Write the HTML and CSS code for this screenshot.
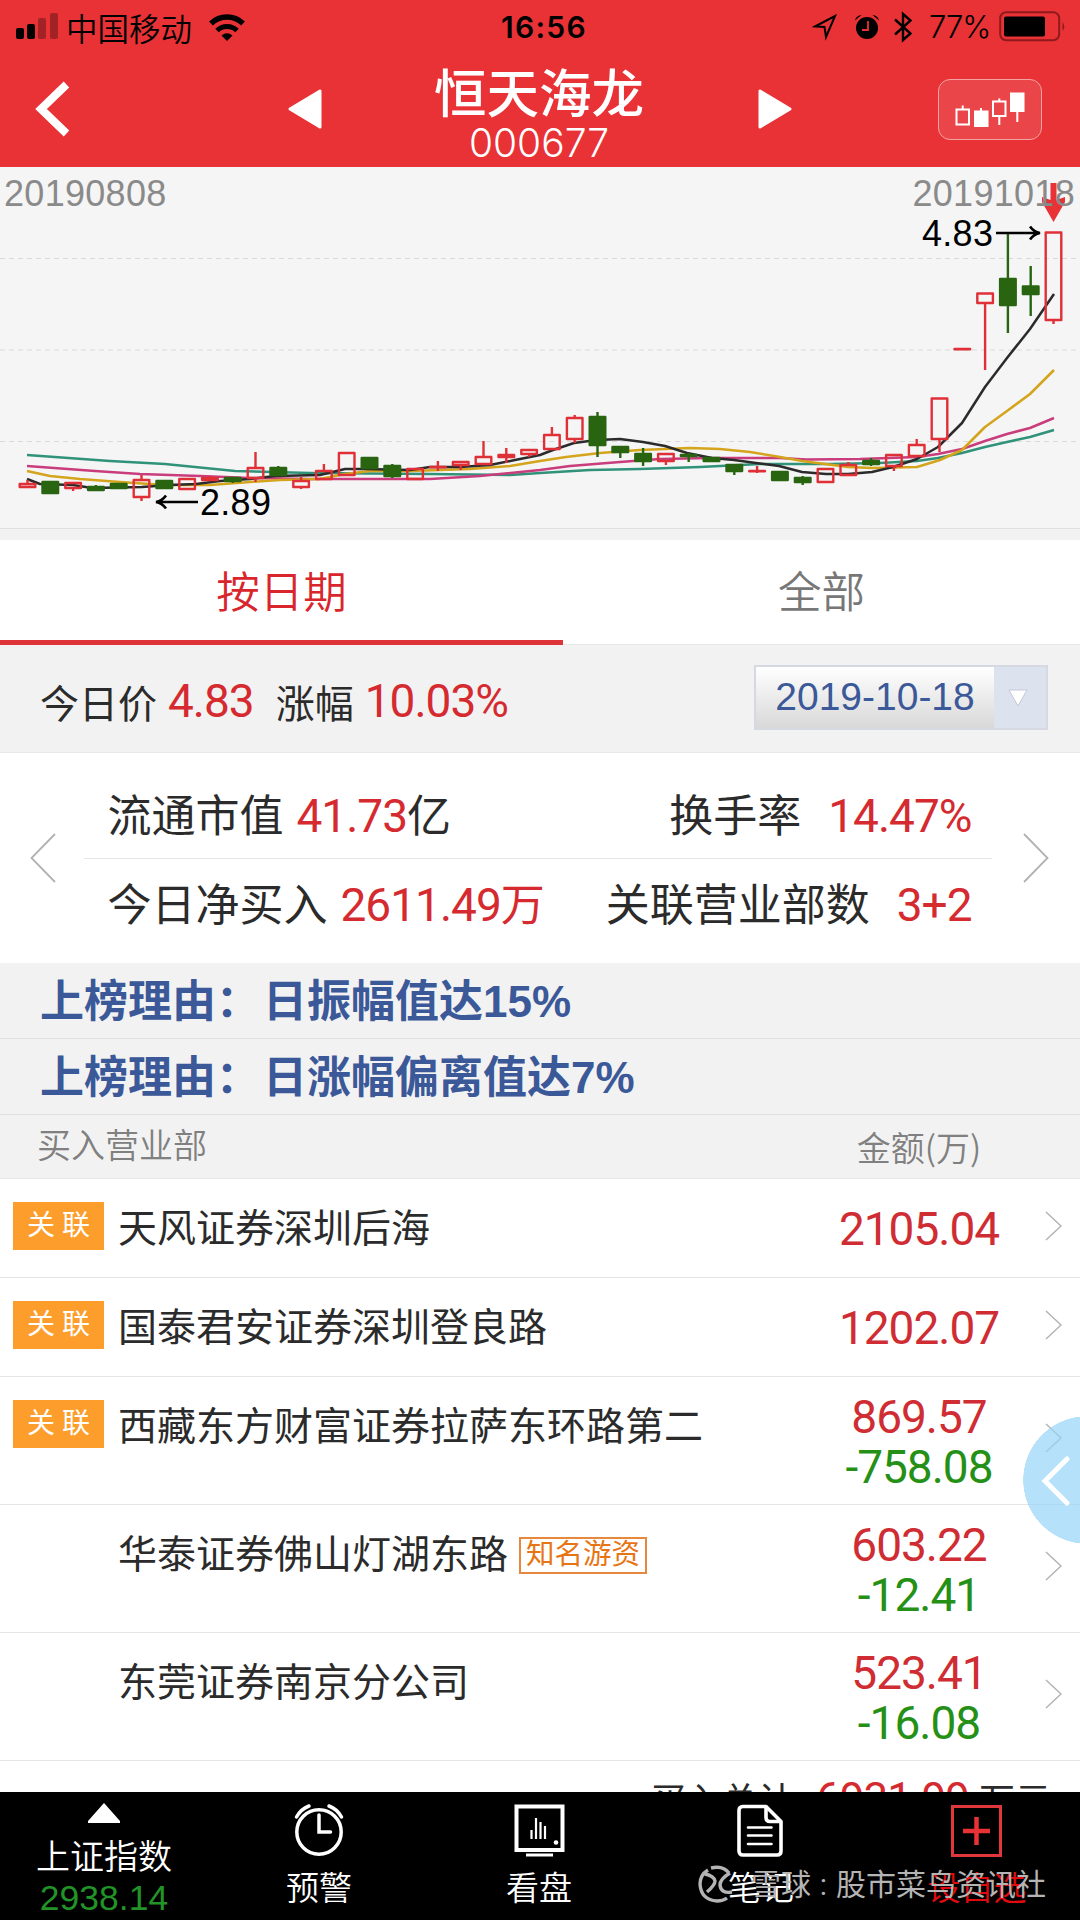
FILE: index.html
```html
<!DOCTYPE html>
<html lang="zh-CN">
<head>
    <meta charset="UTF-8">
    <meta name="viewport" content="width=device-width, initial-scale=1.0">
    <title>恒天海龙 000677</title>
    <link rel="stylesheet" href="styles.css">
</head>
<body>
    <header>
        <div class="status">
            <svg class="signal" width="42" height="28" viewBox="0 0 42 28">
                <rect x="0" y="15" width="8" height="11" rx="2"/>
                <rect x="11" y="11" width="8" height="15" rx="2"/>
                <rect x="22" y="5" width="8" height="21" rx="2" opacity=".3"/>
                <rect x="34" y="0" width="8" height="26" rx="2" opacity=".3"/>
            </svg>
            <span class="carrier">中国移动</span>
            <svg class="wifi" width="36" height="27" viewBox="0 0 36 27">
                <path d="M2 9.500A23 23 0 0 1 34 9.500" fill="none" stroke="#000" stroke-width="5.500"/>
                <path d="M8 16.500A14.500 14.500 0 0 1 28 16.500" fill="none" stroke="#000" stroke-width="5"/>
                <path d="M12.500 21.500Q18 17 23.500 21.500L18 27Z"/>
            </svg>
            <span class="clock">16:56</span>
            <svg class="locate" width="26" height="27" viewBox="0 0 26 27">
                <path d="M3 12.500L23 2L14 23L12.500 13Z" fill="none" stroke="#000" stroke-width="2"/>
            </svg>
            <svg class="alarm" width="24" height="26" viewBox="0 0 24 26">
                <circle cx="12" cy="14" r="11"/>
                <path d="M0 6.500Q1 1.500 6.500 1ZM24 6.500Q23 1.500 17.500 1Z"/>
                <path d="M13 7V16H7" fill="none" stroke="#e83236" stroke-width="1.800"/>
            </svg>
            <svg class="bluetooth" width="18" height="32" viewBox="0 0 18 32">
                <path d="M1 8.500L16.500 22.500L9 29V3L16.500 9.500L1 23.500" fill="none" stroke="#000" stroke-width="2.400"/>
            </svg>
            <span class="percent">77%</span>
            <svg class="battery" width="68" height="32" viewBox="0 0 68 32">
                <rect x="1.200" y="1.200" width="59" height="28" rx="6" fill="none" stroke="#8f1a1c" stroke-width="2"/>
                <rect x="5" y="5.500" width="41" height="20" rx="2"/>
                <path d="M63.500 11Q67 15.500 63.500 20Z" fill="#8f1a1c"/>
            </svg>
        </div>
        <nav class="titlebar">
            <svg class="back" width="36" height="56" viewBox="0 0 36 56">
                <path d="M31.500 3.500L6 28L31.500 52.500" fill="none" stroke="#fff" stroke-width="8"/>
            </svg>
            <svg class="prev" width="34" height="40" viewBox="0 0 34 40">
                <path d="M2 20L32 2V38Z" fill="#fff" stroke="#fff" stroke-width="3" stroke-linejoin="round"/>
            </svg>
            <div class="stock">
                <h1>恒天海龙</h1>
                <div class="code">000677</div>
            </div>
            <svg class="next" width="34" height="40" viewBox="0 0 34 40">
                <path d="M32 20L2 2V38Z" fill="#fff" stroke="#fff" stroke-width="3" stroke-linejoin="round"/>
            </svg>
            <div class="kline-btn">
                <svg width="70" height="36" viewBox="0 0 70 36" fill="none" stroke="#fff" stroke-width="2">
                    <path d="M1.500 18.500H14V33.500H1.500ZM7.700 14.500V18.500"/>
                    <path d="M20 20.500H32.500V35H20ZM26 17V20.500" fill="#fff"/>
                    <path d="M38 10.500H50.500V25H38ZM44.300 7.500V10.500M44.300 25V34"/>
                    <path d="M56 2.500H68.500V20H56ZM62.300 20V31" fill="#fff"/>
                </svg>
            </div>
        </nav>
    </header>

    <svg class="chart" id="chart" width="1080" height="373" viewBox="0 167 1080 373"></svg>

    <div class="tabs">
        <div class="tab active">按日期</div>
        <div class="tab">全部</div>
    </div>

    <section class="price">
        <span>今日价</span><b class="num today">4.83</b>
        <span>涨幅</span><b class="num">10.03%</b>
        <div class="date-select">
            <span>2019-10-18</span>
            <i><svg width="20" height="18" viewBox="0 0 20 18"><path d="M1 1H19L10 17Z" fill="#fff" stroke="#c3c8d6"/></svg></i>
        </div>
    </section>

    <section class="stats">
        <svg class="page-arrow" width="26" height="50" viewBox="0 0 26 50"><path d="M25 1L1.500 25L25 49"/></svg>
        <div class="stats-body">
            <div class="stats-row">
                <div>流通市值<b class="num">41.73</b>亿</div>
                <div>换手率<b class="num wide">14.47%</b></div>
            </div>
            <div class="stats-row">
                <div>今日净买入<b class="num">2611.49<em>万</em></b></div>
                <div>关联营业部数<b class="num wide">3+2</b></div>
            </div>
        </div>
        <svg class="page-arrow" width="26" height="50" viewBox="0 0 26 50"><path d="M1 1L24.500 25L1 49"/></svg>
    </section>

    <div class="reason"><span>上榜理由：</span>日振幅值达15%</div>
    <div class="reason"><span>上榜理由：</span>日涨幅偏离值达7%</div>

    <div class="list-head">
        <span>买入营业部</span>
        <span class="amount">金额(万)</span>
    </div>

    <ul class="list">
        <li>
            <div class="tag-col"><span class="tag">关 联</span></div>
            <div class="name">天风证券深圳后海</div>
            <div class="amount single"><span>2105.04</span></div>
            <svg class="go" width="18" height="30" viewBox="0 0 18 30"><path d="M1 1L16 15L1 29"/></svg>
        </li>
        <li>
            <div class="tag-col"><span class="tag">关 联</span></div>
            <div class="name">国泰君安证券深圳登良路</div>
            <div class="amount single"><span>1202.07</span></div>
            <svg class="go" width="18" height="30" viewBox="0 0 18 30"><path d="M1 1L16 15L1 29"/></svg>
        </li>
        <li class="tall">
            <div class="tag-col"><span class="tag">关 联</span></div>
            <div class="name">西藏东方财富证券拉萨东环路第二</div>
            <div class="amount"><span>869.57</span><span class="sell">-758.08</span></div>
            <svg class="go" width="18" height="30" viewBox="0 0 18 30"><path d="M1 1L16 15L1 29"/></svg>
        </li>
        <li class="tall">
            <div class="tag-col"></div>
            <div class="name">华泰证券佛山灯湖东路<span class="badge">知名游资</span></div>
            <div class="amount"><span>603.22</span><span class="sell">-12.41</span></div>
            <svg class="go" width="18" height="30" viewBox="0 0 18 30"><path d="M1 1L16 15L1 29"/></svg>
        </li>
        <li class="tall">
            <div class="tag-col"></div>
            <div class="name">东莞证券南京分公司</div>
            <div class="amount"><span>523.41</span><span class="sell">-16.08</span></div>
            <svg class="go" width="18" height="30" viewBox="0 0 18 30"><path d="M1 1L16 15L1 29"/></svg>
        </li>
    </ul>
    <div class="total">买入总计<b class="num">6931.99</b>万元</div>

    <div class="drawer">
        <svg width="30" height="50" viewBox="0 0 30 50"><path d="M26 3L4 25L26 47" fill="none" stroke="#fff" stroke-width="5" stroke-linecap="round"/></svg>
    </div>

    <footer>
        <div class="index">
            <svg width="34" height="20" viewBox="0 0 34 20"><path d="M17 0L33 18V20H1V18Z" fill="#fff"/></svg>
            <span>上证指数</span>
            <span class="value">2938.14</span>
        </div>
        <div class="item">
            <svg width="52" height="54" viewBox="0 0 52 54" fill="none" stroke="#fff" stroke-width="3.500">
                <circle cx="26" cy="29" r="22.200"/>
                <path d="M26 12V29H37.500" stroke-linecap="round"/>
                <path d="M3.500 14Q8 6 16 3M48.500 14Q44 6 36 3" stroke-linecap="round"/>
            </svg>
            <span>预警</span>
        </div>
        <div class="item">
            <svg width="52" height="54" viewBox="0 0 52 54" fill="none" stroke="#fff">
                <path d="M3.500 3.500H49.500V47H3.500Z" stroke-width="4"/>
                <path d="M13 52H40" stroke-width="3"/>
                <path d="M18.500 27V36M23 15V36M27.500 19V36M32 23V36" stroke-width="2.200"/>
                <circle cx="43" cy="39.500" r="2.300" fill="#fff" stroke="none"/>
            </svg>
            <span>看盘</span>
        </div>
        <div class="item">
            <svg width="52" height="54" viewBox="0 0 52 54" fill="none" stroke="#fff" stroke-width="3.600" stroke-linejoin="round" stroke-linecap="round">
                <path d="M8 3.500H31L46 18.500V48Q46 52 42 52H8Q4 52 4 48V7.500Q4 3.500 8 3.500Z"/>
                <path d="M31 4V14.500Q31 18.500 35 18.500H45"/>
                <path d="M13 24.500H36.500M13 32.500H36.500M13 41H36.500" stroke-width="2.600"/>
            </svg>
            <span>笔记</span>
        </div>
        <div class="item add">
            <svg width="52" height="54" viewBox="0 0 52 54" fill="none" stroke="#e0373c">
                <path d="M1.500 3.500H49.500V52.500H1.500Z" stroke-width="3"/>
                <path d="M25.500 14V42M12 28H39" stroke="#e83236" stroke-width="4.500"/>
            </svg>
            <span>设自选</span>
        </div>
        <div class="watermark">
            <svg width="38" height="40" viewBox="0 0 38 40" fill="none" stroke="#b4b4b4" stroke-width="3.400">
                <path d="M10 5Q2 10 2 19Q3 35 19 36Q25 36 29 33"/>
                <path d="M13 3Q25 0 31 8M7 9Q16 11 17 16Q17 20 9 27"/>
                <path d="M32 8Q22 14 22 20Q23 29 34 27"/>
            </svg>
            <span>雪球</span><span class="colon">:</span><span>股市菜鸟资讯社</span>
        </div>
    </footer>

    <script>
        const chart = document.getElementById('chart');
        const RED = '#df3038';
        const GREEN = '#296511';
        const START = 27.5;
        const STEP = 22.8;

        // type, body top, body bottom, wick top, wick bottom
        const candles = [
            ['r', 484, 487, 480, 487], ['g', 482, 493, 481, 493], ['r', 483, 488, 482, 491],
            ['g', 487, 490, 485, 491], ['g', 484, 488, 483, 488], ['r', 480, 497, 475, 501],
            ['g', 481, 488, 480, 489], ['r', 479, 489, 478, 489], ['r', 478, 480, 476, 481],
            ['g', 478, 481, 478, 483], ['r', 468, 478, 452, 482], ['g', 468, 475, 466, 476],
            ['r', 481, 487, 477, 489], ['r', 471, 479, 464, 479], ['r', 453, 475, 453, 475],
            ['g', 458, 468, 458, 468], ['g', 466, 476, 464, 478], ['r', 469, 479, 468, 479],
            ['r', 467, 467, 461, 471], ['r', 462, 465, 462, 470], ['r', 457, 464, 441, 464],
            ['r', 455, 457, 448, 463], ['r', 450, 454, 450, 457], ['r', 435, 449, 427, 449],
            ['r', 418, 439, 415, 443], ['g', 417, 445, 412, 457], ['g', 447, 452, 446, 458],
            ['g', 454, 461, 448, 466], ['r', 454, 461, 454, 465], ['g', 455, 456, 453, 462],
            ['g', 458, 461, 457, 462], ['g', 465, 471, 464, 475], ['r', 471, 471, 466, 473],
            ['g', 472, 480, 471, 481], ['g', 478, 482, 476, 485], ['r', 469, 482, 469, 483],
            ['r', 465, 475, 462, 475], ['g', 461, 464, 458, 466], ['r', 455, 466, 455, 471],
            ['r', 445, 456, 439, 456], ['r', 398.5, 439, 398.5, 452], ['r', 349, 349, 349, 349],
            ['r', 293.5, 303, 293.5, 370], ['g', 279, 305, 233, 333], ['g', 286.5, 294, 266, 316],
            ['r', 232.5, 320, 232.5, 324]
        ];

        const lines = [
            ['#2f9279', '27,455 110,461 165,464 195,467 235,471 310,473 430,474 510,475 540,473 590,470 640,469 700,467 760,464 830,464 880,463 917,461 938,458 962,453 985,447 1007,442 1030,437 1054,430'],
            ['#c93d7c', '27,466 95,471 140,474 200,476 250,478 310,479 430,479 480,476 540,470 570,466 620,462 660,459 710,458 780,458 806,459.5 860,459 917,457 938,454 962,449 985,441 1007,434 1030,428 1054,418'],
            ['#d4a51c', '27,471 50,476 80,479 120,482 165,485 210,485 250,482 280,480 320,479 345,474 370,471 410,471 470,469 510,466 540,461 566,457 600,453 640,450 690,448 720,449 750,452 780,457 802,461 825,464 848,467 872,468 917,467 940,460 962,450 985,427 1007,411 1030,394 1054,370'],
            ['#2b2b2b', '27,479 40,484 73,485 92,488 118,487.5 142,487 170,485 196,484 220,481 250,479 275,476 320,475 345,469 365,469 410,470 430,467 460,467 490,465 515,460 540,455 553,450 574,443 597,440 620,439 643,442 665,446 687,453 712,458 734,460 756,463 779,466 802,472 826,474 848,474 872,472 893,467 917,459 938,447 962,423 985,387 1007,358 1030,329 1054,294']
        ];

        let out = '';
        [258.5, 350, 441.5].forEach((y) => {
            out += `<path class="grid" d="M0 ${y}H1080"/>`;
        });
        out += '<rect x="0" y="528" width="1080" height="12" fill="#f2f2f2"/><path d="M0 528.5H1080" stroke="#e0e0e0"/>';

        lines.forEach(([color, points]) => {
            out += `<polyline points="${points}" fill="none" stroke="${color}" stroke-width="2.5" stroke-linejoin="round"/>`;
        });

        candles.forEach(([type, top, bottom, high, low], i) => {
            const x = START + STEP * i;
            const color = type === 'r' ? RED : GREEN;
            const height = Math.max(bottom - top, 0.2);
            out += `<path d="M${x} ${high}V${top}M${x} ${bottom}V${low}" stroke="${color}" stroke-width="2.4"/>`;
            out += `<rect x="${x - 7.8}" y="${top}" width="15.600" height="${height}" fill="${type === 'r' ? 'none' : color}" stroke="${color}" stroke-width="2.4" stroke-linejoin="round"/>`;
        });

        out += `
            <path d="M1050.500 183H1056.500V200L1065 197V202L1053.500 222L1042 202V197L1050.500 200Z" fill="#e83236"/>
            <text x="4" y="206" class="date">20190808</text>
            <text x="1075" y="206" class="date" text-anchor="end">20191018</text>
            <text x="200" y="515" class="mark">2.89</text>
            <text x="922" y="246" class="mark">4.83</text>
            <path class="pointer" d="M198 502H157M166 495.500Q162 501 156 502Q162 503 166 508.500"/>
            <path class="pointer" d="M996 233H1038M1030 226.500Q1034 232 1040 233Q1034 234 1030 239.500"/>`;
        chart.innerHTML = out;
    </script>
</body>
</html>
```

FILE: styles.css
```css
* {
    box-sizing: border-box;
}
body {
    margin: 0;
    width: 1080px;
    height: 1920px;
    overflow: hidden;
    position: relative;
    background-color: #fff;
    color: #2b2b2b;
    font-family: Roboto, "Noto Sans CJK SC", sans-serif;
}
svg {
    display: block;
    flex-shrink: 0;
}
header {
    height: 167px;
    background-color: #e83236;
}
.status {
    display: flex;
    height: 54px;
    align-items: center;
    padding-left: 16px;
    color: #000;
    line-height: 54px;
}
.carrier {
    margin-left: 8px;
    width: 128px;
    font-size: 31.5px;
    font-family: "Noto Sans CJK SC", sans-serif;
    font-weight: 350;
}
.wifi {
    margin-left: 15px;
}
.clock {
    margin-left: 256px;
    width: 88px;
    font-family: Inter, sans-serif;
    font-size: 30px;
    font-weight: 600;
    letter-spacing: 1.3px;
}
.locate {
    margin-left: 223px;
}
.alarm {
    margin-left: 17px;
}
.bluetooth {
    margin-left: 15px;
}
.percent {
    margin-left: 17px;
    width: 62px;
    font-size: 31px;
    font-family: Inter, sans-serif;
    font-weight: 350;
    letter-spacing: -1px;
}
.battery {
    margin-left: 8px;
}
.titlebar {
    display: flex;
    height: 110px;
    align-items: center;
    padding-left: 35px;
}
.prev {
    margin-left: 217px;
}
.stock {
    margin-left: 103px;
    width: 228px;
    height: 110px;
    text-align: center;
    color: #fff;
}
.stock h1 {
    margin: 9px 0 0;
    font-size: 52.5px;
    line-height: 64px;
    font-weight: 500;
}
.code {
    margin-top: -2px;
    font-family: Inter, sans-serif;
    font-weight: 350;
    font-size: 39px;
    line-height: 36px;
}
.next {
    margin-left: 105px;
}
.kline-btn {
    display: flex;
    justify-content: center;
    align-items: center;
    margin-left: 146px;
    width: 104px;
    height: 61px;
    border: 1.5px solid #f5a2a3;
    border-radius: 12px;
    background-color: #ea4649;
}
.chart {
    background-color: #f5f5f5;
}
.grid {
    stroke: #dadada;
    stroke-dasharray: 5 4;
}
.date, .mark {
    font-family: "Liberation Sans", Arial, sans-serif;
    font-size: 36px;
    fill: #8a8a8a;
    letter-spacing: 0.3px;
}
.mark {
    fill: #000;
}
.pointer {
    fill: none;
    stroke: #000;
    stroke-width: 2.6;
}
.tabs {
    display: grid;
    grid-template-columns: 563px 1fr;
    height: 105px;
    border-bottom: 1px solid #e8e8e8;
    background-color: #fff;
    text-align: center;
    font-size: 43.5px;
    line-height: 98px;
    font-weight: 350;
    color: #777;
}
.tab {
    height: 105px;
    padding-top: 5px;
}
.tab.active {
    border-bottom: 5px solid #dd3339;
    color: #d8262c;
}
.num {
    font-family: Roboto, "Noto Sans CJK SC", sans-serif;
    font-size: 46px;
    font-weight: 400;
    letter-spacing: -1px;
    color: #d52a30;
}
.num em {
    font-style: normal;
    font-size: 44px;
    letter-spacing: 0;
}
.price {
    display: flex;
    align-items: center;
    height: 108px;
    padding: 4px 32px 0 40px;
    background-color: #f2f2f2;
    border-bottom: 1px solid #e9e9e9;
    font-size: 39px;
}
.price .num {
    margin-left: 11px;
}
.price .today {
    margin-right: 22px;
}
.date-select {
    display: flex;
    margin-left: auto;
    margin-bottom: 6px;
    width: 294px;
    height: 65px;
    border: 2px solid #d6d9e2;
    font-family: "Liberation Sans", Arial, sans-serif;
    font-size: 39px;
    line-height: 59px;
    color: #3b5998;
}
.date-select span {
    width: 238px;
    text-align: center;
    background: linear-gradient(#fff, #d8d8d8);
}
.date-select i {
    display: flex;
    flex: 1;
    justify-content: center;
    align-items: center;
    padding-right: 4px;
    background-color: #dde2ef;
}
.stats {
    display: flex;
    height: 210px;
    align-items: center;
    justify-content: space-between;
    padding: 0 31px 0 30px;
    background-color: #fff;
}
.page-arrow path, .go path {
    fill: none;
    stroke: #b2b2b2;
    stroke-width: 1.8;
}
.go path {
    stroke-width: 1.4;
}
.stats-body {
    margin-left: -4px;
    width: 908px;
    padding: 17px 0 15px;
}
.stats-row {
    display: flex;
    justify-content: space-between;
    padding: 0 20px 0 24px;
    height: 89px;
    line-height: 92px;
    font-size: 44px;
    white-space: nowrap;
}
.stats-row:first-child {
    border-bottom: 1px solid #e6e6e6;
}
.stats-row .num {
    margin-left: 13px;
}
.stats-row .wide {
    margin-left: 27px;
}
.reason {
    height: 76px;
    padding-left: 40px;
    background-color: #f2f2f2;
    border-bottom: 1px solid #e0e0e0;
    font-family: "Liberation Sans", "Noto Sans CJK SC", sans-serif;
    font-size: 44px;
    line-height: 78px;
    font-weight: 700;
    color: #3b5998;
}
.reason span {
    margin-right: 3px;
}
.list-head {
    display: flex;
    height: 64px;
    padding-left: 37px;
    background-color: #f2f2f2;
    border-bottom: 1px solid #e9e9e9;
    font-size: 34px;
    line-height: 63px;
    font-weight: 350;
    color: #808080;
}
.list-head .amount {
    margin-left: auto;
    margin-right: 60px;
    font-family: "Noto Sans CJK SC", sans-serif;
    font-size: 34px;
    line-height: 63px;
    letter-spacing: 0;
    color: #808080;
}
.list {
    margin: 0;
    padding: 0;
    list-style: none;
}
.list li {
    display: flex;
    height: 99px;
    padding-left: 13px;
    border-bottom: 1px solid #e4e4e4;
    align-items: flex-start;
}
.list li.tall {
    height: 128px;
}
.tag-col {
    width: 105px;
    padding-top: 23px;
}
.tag {
    display: block;
    width: 91px;
    height: 48px;
    background-color: #fd9d2c;
    color: #fff;
    font-size: 28px;
    line-height: 48px;
    text-align: center;
}
.name {
    flex: 1;
    display: flex;
    font-size: 39px;
    line-height: 100px;
    white-space: nowrap;
}
.badge {
    align-self: center;
    margin-left: 11px;
    width: 128px;
    height: 37px;
    border: 2px solid #e6893f;
    font-size: 28.5px;
    line-height: 32px;
    text-align: center;
    color: #e87514;
}
.amount {
    width: 202px;
    text-align: center;
    font-size: 46px;
    letter-spacing: -1px;
    color: #cf2d33;
}
.list .amount {
    padding-top: 15px;
    line-height: 50px;
}
.list .amount.single {
    padding-top: 25px;
}
.list .amount span {
    display: block;
}
.list .amount .sell {
    color: #259016;
}
.go {
    align-self: center;
    margin-left: 25px;
    margin-right: 17px;
    margin-bottom: 5px;
}
.total {
    padding: 12px 29px 0;
    text-align: right;
    font-size: 36px;
    line-height: 52px;
    white-space: nowrap;
}
.total .num {
    font-size: 44px;
    margin: 0 10px 0 22px;
}
/* floating handle, round on its left side only */
.drawer {
    position: absolute;
    top: 1416px;
    right: 0;
    width: 57px;
    height: 128px;
    padding: 40px 0 0 18px;
    background: radial-gradient(circle at 64px 64px, rgba(150, 212, 248, 0.7) 63.5px, transparent 64px);
}
footer {
    position: absolute;
    left: 0;
    bottom: 0;
    width: 1080px;
    height: 128px;
    display: grid;
    grid-template-columns: 208px 222px 218px 226px 206px;
    background-color: #000;
    color: #fff;
}
footer > div {
    display: flex;
    flex-direction: column;
    align-items: center;
}
.index {
    padding-top: 11px;
    font-size: 34px;
    font-weight: 350;
}
.index span {
    margin-top: 12px;
    line-height: 44px;
}
.index .value {
    margin-top: -3px;
    font-family: "Liberation Sans", Arial, sans-serif;
    font-size: 35.5px;
    line-height: 44px;
    color: #229326;
}
.item {
    padding-top: 11px;
    font-size: 33px;
    font-weight: 350;
}
.item span {
    margin-top: 10px;
    line-height: 44px;
}
.add span {
    color: #e00b10;
}
footer .watermark {
    position: absolute;
    left: 698px;
    top: 73px;
    flex-direction: row;
    font-size: 30px;
    line-height: 40px;
    color: #b4b4b4;
    white-space: nowrap;
}
.watermark svg {
    margin-right: 15px;
}
.watermark .colon {
    width: 25px;
    text-align: center;
}
```
